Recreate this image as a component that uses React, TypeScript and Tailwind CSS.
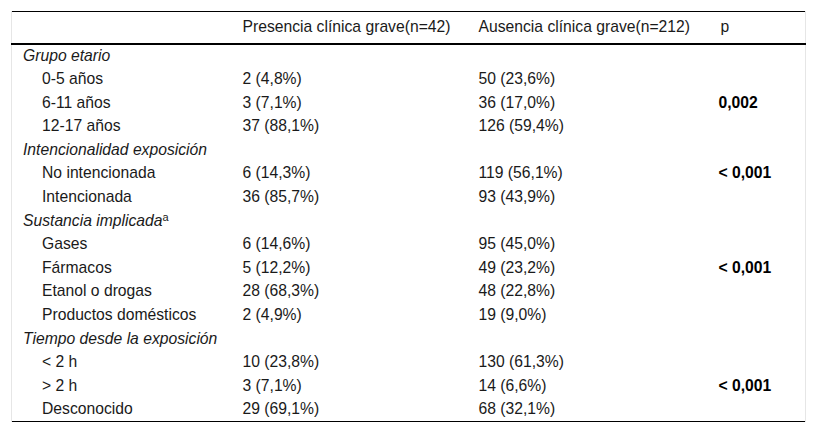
import React from "react";

type Row = { label: React.ReactNode; a?: string; b?: string; p?: string; group?: boolean };

const rows: Row[] = [
  { label: "Grupo etario", group: true },
  { label: "0-5 años", a: "2 (4,8%)", b: "50 (23,6%)" },
  { label: "6-11 años", a: "3 (7,1%)", b: "36 (17,0%)", p: "0,002" },
  { label: "12-17 años", a: "37 (88,1%)", b: "126 (59,4%)" },
  { label: "Intencionalidad exposición", group: true },
  { label: "No intencionada", a: "6 (14,3%)", b: "119 (56,1%)", p: "< 0,001" },
  { label: "Intencionada", a: "36 (85,7%)", b: "93 (43,9%)" },
  {
    label: (
      <>
        Sustancia implicada
        <span className="not-italic text-[11px] leading-none relative -top-[5px]">a</span>
      </>
    ),
    group: true,
  },
  { label: "Gases", a: "6 (14,6%)", b: "95 (45,0%)" },
  { label: "Fármacos", a: "5 (12,2%)", b: "49 (23,2%)", p: "< 0,001" },
  { label: "Etanol o drogas", a: "28 (68,3%)", b: "48 (22,8%)" },
  { label: "Productos domésticos", a: "2 (4,9%)", b: "19 (9,0%)" },
  { label: "Tiempo desde la exposición", group: true },
  { label: "< 2 h", a: "10 (23,8%)", b: "130 (61,3%)" },
  { label: "> 2 h", a: "3 (7,1%)", b: "14 (6,6%)", p: "< 0,001" },
  { label: "Desconocido", a: "29 (69,1%)", b: "68 (32,1%)" },
];

export default function App() {
  return (
    <div
      className="w-[816px] h-[436px] bg-white pt-[11px] pl-[11px] text-[#1a1a1a]"
      style={{ fontFamily: '"Liberation Sans", Arial, sans-serif' }}
    >
      <table className="w-[795px] border-collapse text-[15.7px] table-fixed">
        <colgroup>
          <col className="w-[220px]" />
          <col className="w-[236px]" />
          <col className="w-[242px]" />
          <col />
        </colgroup>
        <thead>
          <tr className="border-t border-t-black border-b-2 border-b-black h-[32px]">
            <th className="border-l border-l-[#e6e6e6] pl-[11px] font-normal text-left"></th>
            <th className="pl-[11px] font-normal text-left leading-[19.6px] whitespace-nowrap">Presencia clínica grave(n=42)</th>
            <th className="pl-[11px] font-normal text-left leading-[19.6px] whitespace-nowrap">Ausencia clínica grave(n=212)</th>
            <th className="border-r border-r-[#e6e6e6] pl-[11px] font-normal text-left leading-[19.6px]">p</th>
          </tr>
        </thead>
        <tbody className="border-b border-b-black">
          {rows.map((r, i) => (
            <tr key={i} className="h-[23.6px] leading-[19.6px]">
              <td
                className={`border-l border-l-[#e6e6e6] whitespace-nowrap ${
                  r.group ? "italic pl-[11px]" : "pl-[30px]"
                }`}
              >
                {r.label}
              </td>
              <td className="pl-[11px] whitespace-nowrap">{r.a}</td>
              <td className="pl-[11px] whitespace-nowrap">{r.b}</td>
              <td className="border-r border-r-[#e6e6e6] pl-[9px] font-bold whitespace-nowrap text-black">
                {r.p}
              </td>
            </tr>
          ))}
        </tbody>
      </table>
    </div>
  );
}
